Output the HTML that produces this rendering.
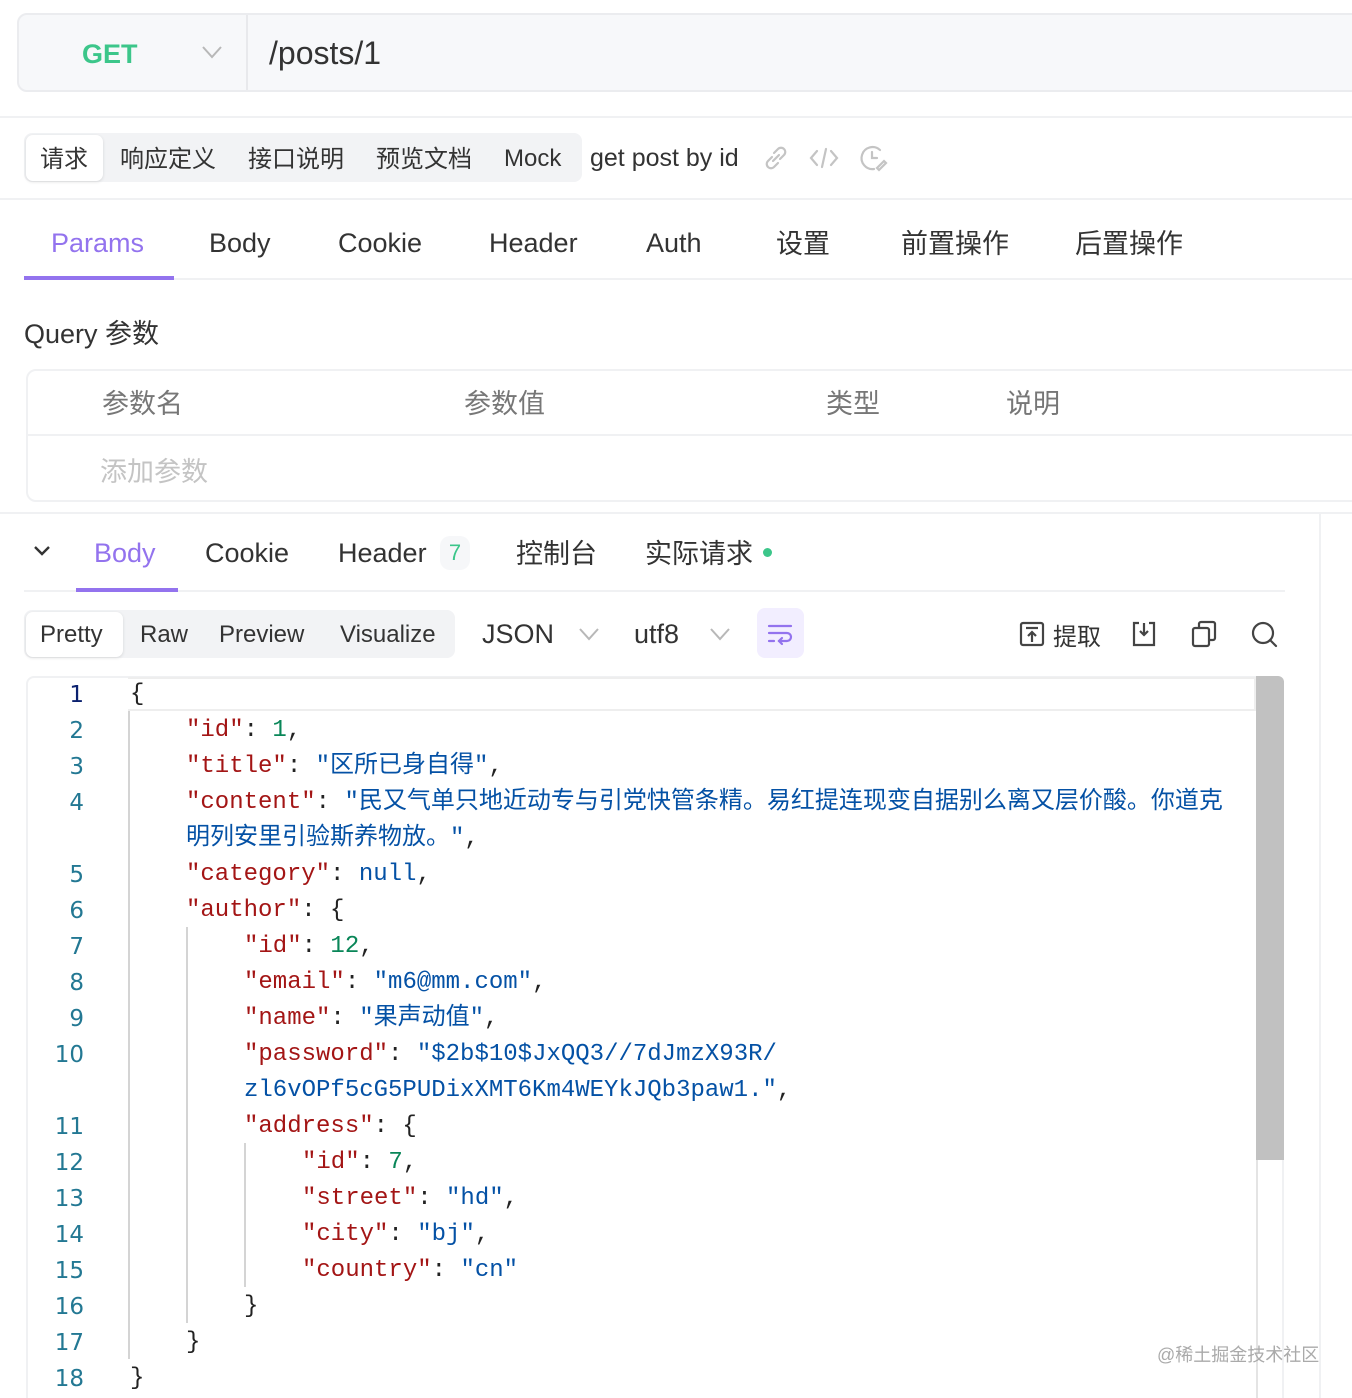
<!DOCTYPE html>
<html style="height:1398px;overflow:hidden"><head><meta charset="utf-8">
<style>
*{margin:0;padding:0;box-sizing:border-box}
html{height:1398px;overflow:hidden}
body{width:1352px;height:1398px;background:#fff;position:relative;overflow:hidden;font-family:"Liberation Sans","Noto Sans CJK SC",sans-serif;color:#333}
.a{position:absolute;white-space:nowrap}
.hl{position:absolute;height:2px;background:#f0f1f3}
.code{font-family:"Liberation Mono","DejaVu Sans Mono","Noto Sans CJK SC",monospace;font-size:24px;line-height:36px}
.k{color:#a31515}.s{color:#0451a5}.n{color:#098658}.p{color:#222}
.ln{position:absolute;width:60px;text-align:right;left:24px;color:#237893;font-family:"DejaVu Sans","Liberation Sans",sans-serif;font-size:23px;line-height:36px}
.cl{position:absolute;left:130px;white-space:pre}
.g{position:absolute;width:2px;background:#d4d4d4}
</style></head><body>

<!-- URL bar -->
<div class="a" style="left:17px;top:13px;width:1350px;height:79px;background:#f7f8fa;border:2px solid #ebecef;border-radius:10px"></div>
<div class="a" style="left:246px;top:15px;width:2px;height:75px;background:#e8e9ec"></div>
<div class="a" style="left:82px;top:39px;font-size:27px;font-weight:bold;color:#3cc68a">GET</div>
<svg class="a" style="left:201px;top:44px" width="22" height="16" viewBox="0 0 22 16"><path d="M2 3 L11 13 L20 3" fill="none" stroke="#b8b8b8" stroke-width="2"/></svg>
<div class="a" style="left:269px;top:35px;font-size:32px;color:#333">/posts/1</div>

<div class="hl" style="left:0;top:116px;width:1352px"></div>

<!-- segmented tabs -->
<div class="a" style="left:24px;top:133px;width:558px;height:49px;background:#f2f3f5;border-radius:8px"></div>
<div class="a" style="left:26px;top:135px;width:77px;height:46px;background:#fff;border-radius:7px;box-shadow:0 1px 3px rgba(0,0,0,.12)"></div>
<div class="a" style="left:40px;top:139px;font-size:24px;color:#333">请求</div>
<div class="a" style="left:120px;top:139px;font-size:24px;color:#333">响应定义</div>
<div class="a" style="left:248px;top:139px;font-size:24px;color:#333">接口说明</div>
<div class="a" style="left:376px;top:139px;font-size:24px;color:#333">预览文档</div>
<div class="a" style="left:504px;top:145px;font-size:24px;color:#333">Mock</div>
<div class="a" style="left:590px;top:144px;font-size:25px;color:#333">get post by id</div>
<svg class="a" style="left:762px;top:144px" width="28" height="28" viewBox="0 0 28 28" fill="none" stroke="#c4c4c4" stroke-width="2.2" stroke-linecap="round"><path d="M12 9 l4-4 a4 4 0 0 1 6 6 l-4 4"/><path d="M16 19 l-4 4 a4 4 0 0 1 -6 -6 l4 -4"/><path d="M11 17 l6 -6"/></svg>
<svg class="a" style="left:809px;top:144px" width="30" height="28" viewBox="0 0 30 28" fill="none" stroke="#c4c4c4" stroke-width="2.2" stroke-linecap="round"><path d="M8 7 L2 14 L8 21"/><path d="M22 7 L28 14 L22 21"/><path d="M17 5 L13 23"/></svg>
<svg class="a" style="left:858px;top:144px" width="30" height="28" viewBox="0 0 30 28" fill="none" stroke="#c4c4c4" stroke-width="2.2" stroke-linecap="round"><path d="M22 6 A11 11 0 1 0 16 25"/><path d="M14 8 V14 H19"/><path d="M19 24 L26 17 L28 19 L21 26 Z"/></svg>

<div class="hl" style="left:0;top:198px;width:1352px"></div>

<!-- params tabs -->
<div class="a" style="left:51px;top:228px;font-size:27px;color:#9373ee">Params</div>
<div class="a" style="left:209px;top:228px;font-size:27px">Body</div>
<div class="a" style="left:338px;top:228px;font-size:27px">Cookie</div>
<div class="a" style="left:489px;top:228px;font-size:27px">Header</div>
<div class="a" style="left:646px;top:228px;font-size:27px">Auth</div>
<div class="a" style="left:776px;top:222px;font-size:27px">设置</div>
<div class="a" style="left:901px;top:222px;font-size:27px">前置操作</div>
<div class="a" style="left:1075px;top:222px;font-size:27px">后置操作</div>
<div class="hl" style="left:24px;top:278px;width:1328px"></div>
<div class="a" style="left:24px;top:276px;width:150px;height:4px;background:#9373ee"></div>

<div class="a" style="left:24px;top:312px;font-size:27px;color:#333">Query 参数</div>

<!-- table -->
<div class="a" style="left:26px;top:369px;width:1340px;height:133px;border:2px solid #f0f1f3;border-radius:10px"></div>
<div class="hl" style="left:28px;top:434px;width:1324px"></div>
<div class="a" style="left:102px;top:382px;font-size:27px;color:#777">参数名</div>
<div class="a" style="left:464px;top:382px;font-size:27px;color:#777">参数值</div>
<div class="a" style="left:826px;top:382px;font-size:27px;color:#777">类型</div>
<div class="a" style="left:1006px;top:382px;font-size:27px;color:#777">说明</div>
<div class="a" style="left:100px;top:450px;font-size:27px;color:#c4c4c4">添加参数</div>

<div class="hl" style="left:0;top:512px;width:1352px"></div>
<div class="a" style="left:1319px;top:514px;width:2px;height:884px;background:#f0f1f3"></div>

<!-- response tabs -->
<svg class="a" style="left:32px;top:544px" width="20" height="14" viewBox="0 0 20 14"><path d="M3 3 L10 10 L17 3" fill="none" stroke="#333" stroke-width="2.4"/></svg>
<div class="a" style="left:94px;top:538px;font-size:27px;color:#9373ee">Body</div>
<div class="a" style="left:205px;top:538px;font-size:27px">Cookie</div>
<div class="a" style="left:338px;top:538px;font-size:27px">Header</div>
<div class="a" style="left:440px;top:536px;width:30px;height:34px;background:#f6f7f9;border-radius:10px;font-size:22px;color:#3cc68a;text-align:center;line-height:34px">7</div>
<div class="a" style="left:516px;top:532px;font-size:27px">控制台</div>
<div class="a" style="left:645px;top:532px;font-size:27px">实际请求</div>
<div class="a" style="left:763px;top:548px;width:9px;height:9px;border-radius:50%;background:#3cc68a"></div>
<div class="hl" style="left:24px;top:590px;width:1261px"></div>
<div class="a" style="left:76px;top:588px;width:102px;height:4px;background:#9373ee"></div>

<!-- toolbar -->
<div class="a" style="left:24px;top:610px;width:431px;height:48px;background:#f2f3f5;border-radius:8px"></div>
<div class="a" style="left:26px;top:612px;width:97px;height:45px;background:#fff;border-radius:7px;box-shadow:0 1px 3px rgba(0,0,0,.12)"></div>
<div class="a" style="left:40px;top:621px;font-size:24px">Pretty</div>
<div class="a" style="left:140px;top:621px;font-size:24px">Raw</div>
<div class="a" style="left:219px;top:621px;font-size:24px">Preview</div>
<div class="a" style="left:340px;top:621px;font-size:24px">Visualize</div>
<div class="a" style="left:482px;top:619px;font-size:27px">JSON</div>
<svg class="a" style="left:578px;top:626px" width="22" height="16" viewBox="0 0 22 16"><path d="M2 3 L11 13 L20 3" fill="none" stroke="#b8b8b8" stroke-width="2"/></svg>
<div class="a" style="left:634px;top:619px;font-size:27px">utf8</div>
<svg class="a" style="left:709px;top:626px" width="22" height="16" viewBox="0 0 22 16"><path d="M2 3 L11 13 L20 3" fill="none" stroke="#b8b8b8" stroke-width="2"/></svg>
<div class="a" style="left:757px;top:608px;width:47px;height:50px;background:#f2eeff;border-radius:8px"></div>
<svg class="a" style="left:766px;top:620px" width="28" height="28" viewBox="0 0 28 28" fill="none" stroke="#9373ee" stroke-width="2.2" stroke-linecap="round"><path d="M3 6 H25"/><path d="M3 13 H21 a4 4 0 0 1 0 8 H13"/><path d="M16 18 L13 21 L16 24"/><path d="M3 21 H8"/></svg>
<svg class="a" style="left:1019px;top:621px" width="26" height="26" viewBox="0 0 26 26" fill="none" stroke="#444" stroke-width="2.2"><rect x="2" y="2" width="22" height="22" rx="2"/><path d="M7 7 H19"/><path d="M13 21 V11 M9 15 L13 11 L17 15"/></svg>
<div class="a" style="left:1053px;top:617px;font-size:24px">提取</div>
<svg class="a" style="left:1131px;top:620px" width="26" height="28" viewBox="0 0 26 28" fill="none" stroke="#444" stroke-width="2.2"><path d="M8 3 H3 V25 H23 V3 H18"/><path d="M13 3 V15 M9 11 L13 15 L17 11"/></svg>
<svg class="a" style="left:1191px;top:620px" width="26" height="28" viewBox="0 0 26 28" fill="none" stroke="#444" stroke-width="2.2"><rect x="2" y="8" width="16" height="18" rx="2"/><path d="M8 8 V4 a2 2 0 0 1 2-2 H22 a2 2 0 0 1 2 2 V18 a2 2 0 0 1 -2 2 H18"/></svg>
<svg class="a" style="left:1250px;top:620px" width="28" height="28" viewBox="0 0 28 28" fill="none" stroke="#444" stroke-width="2.2" stroke-linecap="round"><circle cx="13" cy="13" r="10"/><path d="M20 20 L26 26"/></svg>

<!-- editor -->
<div class="a" style="left:26px;top:676px;width:1258px;height:722px;border:2px solid #f0f1f3;border-bottom:none;border-radius:8px 8px 0 0"></div>
<div class="a" style="left:1256px;top:676px;width:28px;height:484px;background:#c1c1c1;border-top-right-radius:6px"></div>
<div class="a" style="left:1256px;top:1160px;width:2px;height:238px;background:#e4e4e4"></div>
<div class="a" style="left:128px;top:677px;width:1128px;height:34px;border:2px solid #eeeeee;border-left:none"></div>

<div class="g" style="left:128px;top:711px;height:648px"></div>
<div class="g" style="left:186px;top:927px;height:396px"></div>
<div class="g" style="left:244px;top:1143px;height:144px"></div>

<div class="ln" style="top:677px;color:#0b216f">1</div>
<div class="ln" style="top:713px">2</div>
<div class="ln" style="top:749px">3</div>
<div class="ln" style="top:785px">4</div>
<div class="ln" style="top:857px">5</div>
<div class="ln" style="top:893px">6</div>
<div class="ln" style="top:929px">7</div>
<div class="ln" style="top:965px">8</div>
<div class="ln" style="top:1001px">9</div>
<div class="ln" style="top:1037px">10</div>
<div class="ln" style="top:1109px">11</div>
<div class="ln" style="top:1145px">12</div>
<div class="ln" style="top:1181px">13</div>
<div class="ln" style="top:1217px">14</div>
<div class="ln" style="top:1253px">15</div>
<div class="ln" style="top:1289px">16</div>
<div class="ln" style="top:1325px">17</div>
<div class="ln" style="top:1361px">18</div>

<div class="code">
<div class="cl p" style="top:677px">{</div>
<div class="cl" style="top:713px;left:186px"><span class="k">"id"</span><span class="p">: </span><span class="n">1</span><span class="p">,</span></div>
<div class="cl" style="top:749px;left:186px"><span class="k">"title"</span><span class="p">: </span><span class="s">"区所已身自得"</span><span class="p">,</span></div>
<div class="cl" style="top:785px;left:186px"><span class="k">"content"</span><span class="p">: </span><span class="s">"民又气单只地近动专与引党快管条精。易红提连现变自据别么离又层价酸。你道克</span></div>
<div class="cl" style="top:821px;left:186px"><span class="s">明列安里引验斯养物放。"</span><span class="p">,</span></div>
<div class="cl" style="top:857px;left:186px"><span class="k">"category"</span><span class="p">: </span><span class="s">null</span><span class="p">,</span></div>
<div class="cl" style="top:893px;left:186px"><span class="k">"author"</span><span class="p">: {</span></div>
<div class="cl" style="top:929px;left:244px"><span class="k">"id"</span><span class="p">: </span><span class="n">12</span><span class="p">,</span></div>
<div class="cl" style="top:965px;left:244px"><span class="k">"email"</span><span class="p">: </span><span class="s">"m6@mm.com"</span><span class="p">,</span></div>
<div class="cl" style="top:1001px;left:244px"><span class="k">"name"</span><span class="p">: </span><span class="s">"果声动值"</span><span class="p">,</span></div>
<div class="cl" style="top:1037px;left:244px"><span class="k">"password"</span><span class="p">: </span><span class="s">"$2b$10$JxQQ3//7dJmzX93R/</span></div>
<div class="cl" style="top:1073px;left:244px"><span class="s">zl6vOPf5cG5PUDixXMT6Km4WEYkJQb3paw1."</span><span class="p">,</span></div>
<div class="cl" style="top:1109px;left:244px"><span class="k">"address"</span><span class="p">: {</span></div>
<div class="cl" style="top:1145px;left:302px"><span class="k">"id"</span><span class="p">: </span><span class="n">7</span><span class="p">,</span></div>
<div class="cl" style="top:1181px;left:302px"><span class="k">"street"</span><span class="p">: </span><span class="s">"hd"</span><span class="p">,</span></div>
<div class="cl" style="top:1217px;left:302px"><span class="k">"city"</span><span class="p">: </span><span class="s">"bj"</span><span class="p">,</span></div>
<div class="cl" style="top:1253px;left:302px"><span class="k">"country"</span><span class="p">: </span><span class="s">"cn"</span></div>
<div class="cl p" style="top:1289px;left:244px">}</div>
<div class="cl p" style="top:1325px;left:186px">}</div>
<div class="cl p" style="top:1361px;left:130px">}</div>
</div>

<div class="a" style="left:1157px;top:1341px;font-size:18px;color:#aaa">@稀土掘金技术社区</div>
</body></html>
